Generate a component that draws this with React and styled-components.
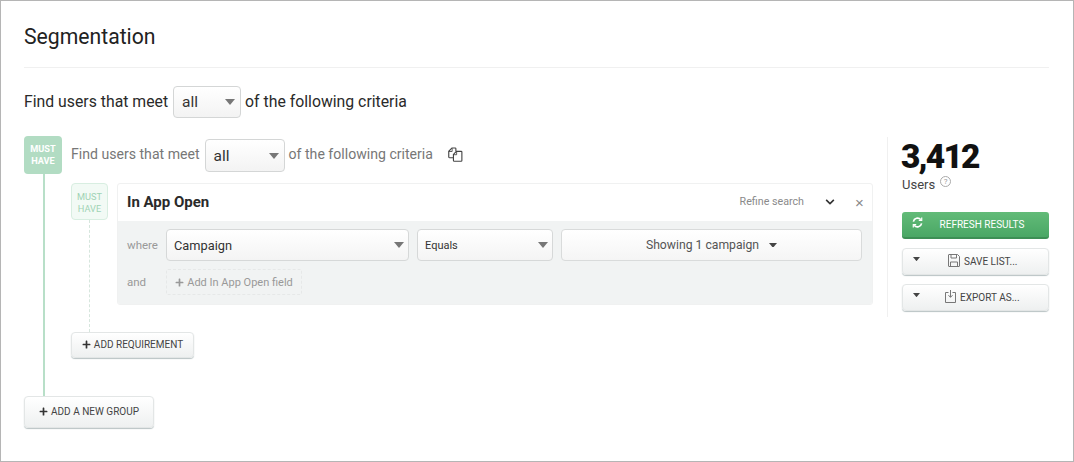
import React from 'react'
import styled, { createGlobalStyle } from 'styled-components'
import { FaPlus, FaChevronDown } from 'react-icons/fa'

const GlobalStyle = createGlobalStyle`
    html, body {
        margin: 0;
        padding: 0;
        background: #fff;
    }
    body {
        font-family: "Roboto", "Liberation Sans", sans-serif;
        color: #222;
    }
`

const Caret = ({ color = '#777', size = 10 }) => (
    <svg width={size} height={size * 0.6} viewBox="0 0 10 6">
        <path d="M0 0h10L5 6z" fill={color} />
    </svg>
)

const CopyIcon = () => (
    <svg width="15" height="15" viewBox="0 0 16 16" fill="none" stroke="#444" strokeWidth="1.2">
        <path d="M5.6 11.4H1.6a.8.8 0 0 1-.8-.8V4.6L4.2 1h3.4a.8.8 0 0 1 .8.8v2.8" />
        <path d="M1 4.8h3.4V1.2" strokeWidth=".9" />
        <path d="M5.8 7.8 9 4.6h5a.8.8 0 0 1 .8.8v9a.8.8 0 0 1-.8.8H6.6a.8.8 0 0 1-.8-.8z" />
        <path d="M6 8.2h3.2V4.8" strokeWidth=".9" />
    </svg>
)

const RefreshIcon = () => (
    <svg width="11" height="11" viewBox="0 0 12 12" fill="none" stroke="#fff" strokeWidth="1.8">
        <path d="M1.5 5A4.6 4.6 0 0 1 9.6 3" />
        <path d="M10.5 7A4.6 4.6 0 0 1 2.4 9" />
        <path d="M10.6.6v3.2H7.4M1.4 11.4V8.2h3.2" strokeWidth="1.3" />
    </svg>
)

const SaveIcon = () => (
    <svg width="12" height="13" viewBox="0 0 12 13" fill="none" stroke="#777" strokeWidth="1">
        <path d="M1 .5h8.5l2 2V12a.5.5 0 0 1-.5.5H1a.5.5 0 0 1-.5-.5V1A.5.5 0 0 1 1 .5z" />
        <path d="M3 .5v3.5h5.5V.5M2.5 12.5V8h7v4.5" />
    </svg>
)

const ExportIcon = () => (
    <svg width="11" height="13" viewBox="0 0 11 13" fill="none" stroke="#777" strokeWidth="1">
        <path d="M3.5 2.5H.5v10h10v-10h-3" />
        <path d="M5.5 0v7M3.5 5.2l2 2.2 2-2.2" />
    </svg>
)

const App = () => (
    <Frame>
        <GlobalStyle />
        <Title>Segmentation</Title>
        <Criteria>
            <Words>Find users that meet</Words>
            <Select $width={68} $height={32}>all<Caret /></Select>
            <Words>of the following criteria</Words>
        </Criteria>
        <Body>
            <Main>
                <Group>
                    <Rail>
                        <GroupBadge>MUST<br />HAVE</GroupBadge>
                        <RailLine />
                    </Rail>
                    <GroupContent>
                        <SubCriteria>
                            <Words>Find users that meet</Words>
                            <Select $width={80} $height={33}>all<Caret /></Select>
                            <Words>of the following criteria</Words>
                            <CopyButton><CopyIcon /></CopyButton>
                        </SubCriteria>
                        <Requirement>
                            <ReqRail>
                                <ReqBadge>MUST<br />HAVE</ReqBadge>
                                <DashLine />
                            </ReqRail>
                            <Card>
                                <CardHead>
                                    <CardTitle>In App Open</CardTitle>
                                    <Refine>Refine search</Refine>
                                    <Chevron><FaChevronDown size={10} /></Chevron>
                                    <Close>×</Close>
                                </CardHead>
                                <CardBody>
                                    <FieldRow>
                                        <FieldLabel>where</FieldLabel>
                                        <FieldSelect $width={243}>Campaign<Caret /></FieldSelect>
                                        <FieldSelect $width={136} $small>Equals<Caret /></FieldSelect>
                                        <ShowingButton>Showing 1 campaign<Caret color="#444" size={8} /></ShowingButton>
                                    </FieldRow>
                                    <AddRow>
                                        <FieldLabel>and</FieldLabel>
                                        <AddField><FaPlus size={9} />Add In App Open field</AddField>
                                    </AddRow>
                                </CardBody>
                            </Card>
                        </Requirement>
                        <AddRequirement><FaPlus size={9} />ADD REQUIREMENT</AddRequirement>
                    </GroupContent>
                </Group>
                <AddGroup><FaPlus size={9} />ADD A NEW GROUP</AddGroup>
            </Main>
            <Side>
                <Count>3,412</Count>
                <Users>Users<Help>?</Help></Users>
                <Refresh><RefreshIcon /><span>REFRESH RESULTS</span></Refresh>
                <ActionButton $offset={25}>
                    <Caret color="#444" size={7} />
                    <span><SaveIcon />SAVE LIST...</span>
                </ActionButton>
                <ActionButton $offset={22}>
                    <Caret color="#444" size={7} />
                    <span><ExportIcon />EXPORT AS...</span>
                </ActionButton>
            </Side>
        </Body>
    </Frame>
)

const Frame = styled.div`
    box-sizing: border-box;
    width: 1074px;
    height: 462px;
    border: 1px solid #b5b5b5;
    padding: 0 24px 0 23px;
    overflow: hidden;
`
const Title = styled.h1`
    margin: 0;
    height: 67px;
    box-sizing: border-box;
    padding-top: 22px;
    font-size: 21.2px;
    line-height: 28px;
    font-weight: 400;
    color: #222;
    border-bottom: 1px solid #f0f0f0;
`
const Criteria = styled.div`
    display: flex;
    align-items: center;
    gap: 4px;
    margin-top: 18px;
    font-size: 15.8px;
    color: #2a2a2a;
`
const Words = styled.span`
    padding-bottom: 2px;
`
const Select = styled.div`
    box-sizing: border-box;
    width: ${(p) => p.$width}px;
    height: ${(p) => p.$height}px;
    display: flex;
    align-items: center;
    justify-content: space-between;
    padding: 0 5px 0 8px;
    margin: 0 0 0 1px;
    border: 1px solid #d4d6d6;
    border-radius: 4px;
    background: linear-gradient(#fff, #f3f3f3);
    font-size: 15.5px;
    color: #333;
`
const Body = styled.div`
    display: flex;
    align-items: flex-start;
    margin-top: 18px;
`
const Main = styled.div`
    width: 863px;
    flex: none;
`
const Group = styled.div`
    display: flex;
    height: 260px;
`
const Rail = styled.div`
    width: 38px;
    flex: none;
    display: flex;
    flex-direction: column;
    align-items: center;
`
const GroupBadge = styled.div`
    box-sizing: border-box;
    width: 38px;
    height: 38px;
    padding-top: 7px;
    border-radius: 4px;
    background: #b2dcc3;
    color: #fff;
    font-size: 9.2px;
    line-height: 12px;
    font-weight: 700;
    text-align: center;
`
const RailLine = styled.div`
    flex: 1;
    width: 2px;
    margin-left: 2px;
    background: #b8dfc8;
`
const GroupContent = styled.div`
    flex: 1;
    min-width: 0;
    margin-left: 9px;
`
const SubCriteria = styled.div`
    display: flex;
    align-items: center;
    gap: 4px;
    height: 33px;
    margin-top: 3px;
    font-size: 14.1px;
    color: #777;
    ${Words} {
        padding-bottom: 3px;
    }
`
const CopyButton = styled.span`
    display: flex;
    margin: 0 0 2px 11px;
`
const Requirement = styled.div`
    display: flex;
    margin-top: 11px;
    height: 149px;
`
const ReqRail = styled.div`
    width: 37px;
    flex: none;
    display: flex;
    flex-direction: column;
    align-items: center;
`
const ReqBadge = styled.div`
    box-sizing: border-box;
    width: 37px;
    height: 37px;
    padding-top: 7px;
    border: 1px solid #d8eee1;
    border-radius: 4px;
    background: #f2faf5;
    color: #9fd3b4;
    font-size: 9.2px;
    line-height: 12px;
    font-weight: 400;
    text-align: center;
`
const DashLine = styled.div`
    flex: 1;
    border-left: 1px dashed #d6e6dd;
`
const Card = styled.div`
    box-sizing: border-box;
    width: 756px;
    height: 122px;
    margin-left: 9px;
    border: 1px solid #f0f1f1;
    border-radius: 3px;
    overflow: hidden;
`
const CardHead = styled.div`
    display: flex;
    align-items: center;
    box-sizing: border-box;
    height: 37px;
    padding: 0 7px 2px 9px;
`
const CardTitle = styled.div`
    flex: 1;
    font-size: 15px;
    font-weight: 700;
    color: #2a2a2a;
`
const Refine = styled.div`
    font-size: 10.7px;
    color: #8a8a8a;
`
const Chevron = styled.span`
    display: flex;
    margin-left: 21px;
    color: #333;
`
const Close = styled.span`
    width: 10px;
    margin: 2px 0 0 20px;
    font-size: 15px;
    line-height: 15px;
    color: #888;
    font-family: "Liberation Sans", sans-serif;
`
const CardBody = styled.div`
    height: 84px;
    box-sizing: border-box;
    padding-top: 8px;
    background: #f1f3f3;
`
const FieldRow = styled.div`
    display: flex;
    align-items: center;
    gap: 8px;
    padding-left: 9px;
    padding-right: 10px;
`
const AddRow = styled(FieldRow)`
    margin-top: 8px;
`
const FieldLabel = styled.div`
    width: 31px;
    flex: none;
    font-size: 11.5px;
    color: #999;
`
const FieldSelect = styled.div`
    box-sizing: border-box;
    width: ${(p) => p.$width}px;
    height: 32px;
    flex: none;
    display: flex;
    align-items: center;
    justify-content: space-between;
    padding: 0 4px 0 7px;
    border: 1px solid #d6d8d8;
    border-radius: 4px;
    background: linear-gradient(#fff, #f4f4f4);
    font-size: ${(p) => (p.$small ? '11px' : '12.8px')};
    color: #333;
`
const ShowingButton = styled.div`
    flex: 1;
    box-sizing: border-box;
    height: 32px;
    display: flex;
    align-items: center;
    justify-content: center;
    gap: 10px;
    border: 1px solid #d9dbdb;
    border-radius: 4px;
    background: linear-gradient(#fff, #f5f5f5);
    font-size: 12.2px;
    color: #555;
`
const AddField = styled.div`
    box-sizing: border-box;
    width: 136px;
    height: 26px;
    display: flex;
    align-items: center;
    justify-content: center;
    gap: 3px;
    border: 1px dashed #e6e8e8;
    border-radius: 2px;
    font-size: 11px;
    color: #999;
`
const PlainButton = styled.div`
    box-sizing: border-box;
    display: flex;
    align-items: center;
    justify-content: center;
    gap: 3px;
    padding-bottom: 2px;
    border: 1px solid #e3e6e6;
    border-radius: 4px;
    box-shadow: 0 1px 1px #b9c3c4;
    background: linear-gradient(#fff, #eef0f0);
    font-size: 10px;
    color: #444;
    svg {
        color: #333;
    }
`
const AddRequirement = styled(PlainButton)`
    width: 123px;
    height: 26px;
`
const AddGroup = styled(PlainButton)`
    width: 130px;
    height: 32px;
`
const Side = styled.div`
    width: 162px;
    height: 180px;
    flex: none;
    box-sizing: border-box;
    margin-top: 1px;
    padding-left: 14px;
    border-left: 1px solid #f0f0f0;
`
const Count = styled.div`
    margin: 2px 0 0 -1px;
    font-size: 33.5px;
    line-height: 36px;
    font-weight: 900;
    letter-spacing: -1.8px;
    color: #111;
`
const Users = styled.div`
    display: flex;
    align-items: flex-start;
    gap: 4px;
    height: 20px;
    margin-top: 1px;
    font-size: 13px;
    line-height: 18px;
    color: #444;
`
const Help = styled.span`
    box-sizing: border-box;
    width: 11px;
    height: 11px;
    margin: 0 0 0 1px;
    border: 1px solid #aaa;
    border-radius: 50%;
    font-size: 8px;
    line-height: 9px;
    text-align: center;
    color: #999;
`
const Refresh = styled.div`
    box-sizing: border-box;
    width: 147px;
    height: 27px;
    margin-top: 16px;
    padding: 0 12px 4px 10px;
    display: flex;
    align-items: center;
    justify-content: space-between;
    border-bottom: 2px solid #3d8f55;
    border-radius: 3px;
    background: linear-gradient(#62bb78, #4aa765);
    color: #fff;
    font-size: 10px;
    span {
        flex: 1;
        text-align: center;
        padding-left: 4px;
        position: relative;
        top: 2px;
    }
`
const ActionButton = styled(PlainButton)`
    width: 147px;
    height: 27px;
    margin-top: 9px;
    padding: 0 12px 0 10px;
    justify-content: flex-start;
    > svg {
        margin-bottom: 5px;
    }
    span {
        display: flex;
        align-items: center;
        gap: 4px;
        margin-left: ${(p) => p.$offset}px;
    }
    span svg {
        margin-bottom: 3px;
    }
`

export default App
